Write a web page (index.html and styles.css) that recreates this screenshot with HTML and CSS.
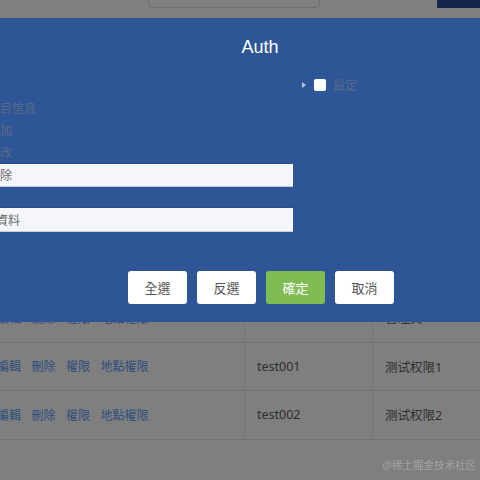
FILE: index.html
```html
<!DOCTYPE html>
<html lang="zh-Hant">
<head>
<meta charset="utf-8">
<title>Auth</title>
<link rel="stylesheet" href="styles.css">
</head>
<body>
<div class="page">
  <div class="topbar">
    <div class="search"></div>
    <div class="navbtn"></div>
  </div>
  <div class="table">
    <div class="row head">
      <div class="cell">操作</div>
      <div class="cell">名稱</div>
      <div class="cell">描述</div>
    </div>
    <div class="row">
      <div class="cell links"><a>編輯</a><a>刪除</a><a>權限</a><a>地點權限</a></div>
      <div class="cell">user</div>
      <div class="cell">管理員</div>
    </div>
    <div class="row">
      <div class="cell links"><a>編輯</a><a>刪除</a><a>權限</a><a>地點權限</a></div>
      <div class="cell">test001</div>
      <div class="cell">测试权限1</div>
    </div>
    <div class="row">
      <div class="cell links"><a>編輯</a><a>刪除</a><a>權限</a><a>地點權限</a></div>
      <div class="cell">test002</div>
      <div class="cell">测试权限2</div>
    </div>
  </div>
</div>
<div class="overlay"></div>
<div class="modal">
  <div class="modal-title">Auth</div>
  <div class="modal-body">
    <div class="tree left">
      <div class="node lv0">系統</div>
      <div class="node lv1">項目信息</div>
      <div class="node lv1">添加</div>
      <div class="node lv1">修改</div>
      <div class="node lv1 on">刪除</div>
      <div class="node lv0">用戶</div>
      <div class="node lv2 on">用戶資料</div>
    </div>
    <div class="tree right">
      <div class="node root">
        <span class="caret"></span>
        <span class="check"></span>
        <span class="label">設定</span>
      </div>
    </div>
  </div>
  <div class="modal-foot">
    <button class="btn">全選</button>
    <button class="btn">反選</button>
    <button class="btn ok">確定</button>
    <button class="btn">取消</button>
  </div>
</div>
<div class="watermark">@稀土掘金技术社区</div>
</body>
</html>
```
FILE: styles.css
```css
* { box-sizing: border-box; }
html, body {
  margin: 0;
  padding: 0;
  width: 480px;
  height: 480px;
  overflow: hidden;
  background: #ffffff;
  font-family: "Noto Sans", "Noto Sans CJK TC", "Noto Sans CJK SC", sans-serif;
  font-size: 12px;
}
.page { width: 480px; }
.topbar {
  height: 8px;
  display: flex;
  align-items: flex-end;
  overflow: hidden;
}
.search {
  margin-left: 148px;
  width: 172px;
  height: 30px;
  flex: none;
  border: 1px solid #dcdfe6;
  border-radius: 4px;
  background: #fff;
}
.navbtn {
  margin-left: auto;
  width: 43px;
  height: 8px;
  background: #2a4c94;
}
.table {
  margin-top: 237.5px;
  margin-left: -15px;
  width: 620px;
}
.row {
  display: grid;
  grid-template-columns: 260px 128px 1fr;
  height: 48.5px;
  border-bottom: 1px solid #e6e6e6;
}
.cell {
  display: flex;
  align-items: center;
  padding: 0 12px;
  border-right: 1px solid #e6e6e6;
  color: #5e5e5e;
  font-size: 12.5px;
  white-space: nowrap;
}
.cell.links { font-size: 12px; }
.links a {
  color: #5a9ef8;
  margin-right: 10.5px;
}
.overlay {
  position: fixed;
  inset: 0;
  background: rgba(0, 0, 0, 0.5);
}
.modal {
  position: absolute;
  top: 18px;
  left: -40px;
  width: 600px;
  height: 304px;
  background: #2e5596;
  display: flex;
  flex-direction: column;
}
.modal-title {
  height: 56px;
  line-height: 58px;
  text-align: center;
  color: #ffffff;
  font-family: "Liberation Sans", "Noto Sans", sans-serif;
  font-size: 18px;
}
.modal-body {
  display: flex;
  height: 176px;
}
.tree.left { width: 333px; }
.tree.right { padding-left: 9px; }
.node {
  height: 22.4px;
  display: flex;
  align-items: center;
  color: #5b6a86;
  font-size: 12px;
  white-space: nowrap;
}
.node.lv0 { padding-left: 0; }
.node.lv1 { padding-left: 28px; }
.node.lv2 { padding-left: 12px; }
.node.on {
  background: #f4f6fa;
  color: #666;
  box-shadow: 0 1px 0 #c5cedd, 0 -1px 0 #284d8c;
}
.caret {
  width: 0;
  height: 0;
  border-top: 3.5px solid transparent;
  border-bottom: 3.5px solid transparent;
  border-left: 4px solid #b8c4d8;
  margin-right: 8px;
}
.check {
  width: 12px;
  height: 12px;
  background: #ffffff;
  border-radius: 2px;
  margin-right: 7px;
}
.label { color: #5b6a86; }
.modal-foot {
  margin-top: 21px;
  display: flex;
  justify-content: center;
  gap: 10px;
  padding-left: 2px;
}
.btn {
  width: 59px;
  height: 33px;
  border: none;
  border-radius: 3px;
  background: #ffffff;
  color: #555;
  font-family: "Noto Sans CJK TC", "Noto Sans CJK SC", sans-serif;
  font-size: 13px;
  padding: 0;
}
.btn.ok {
  background: #80bc54;
  color: #ffffff;
}
.watermark {
  position: fixed;
  right: 4px;
  bottom: 8px;
  color: #a3a3a3;
  font-size: 10.5px;
}
```
